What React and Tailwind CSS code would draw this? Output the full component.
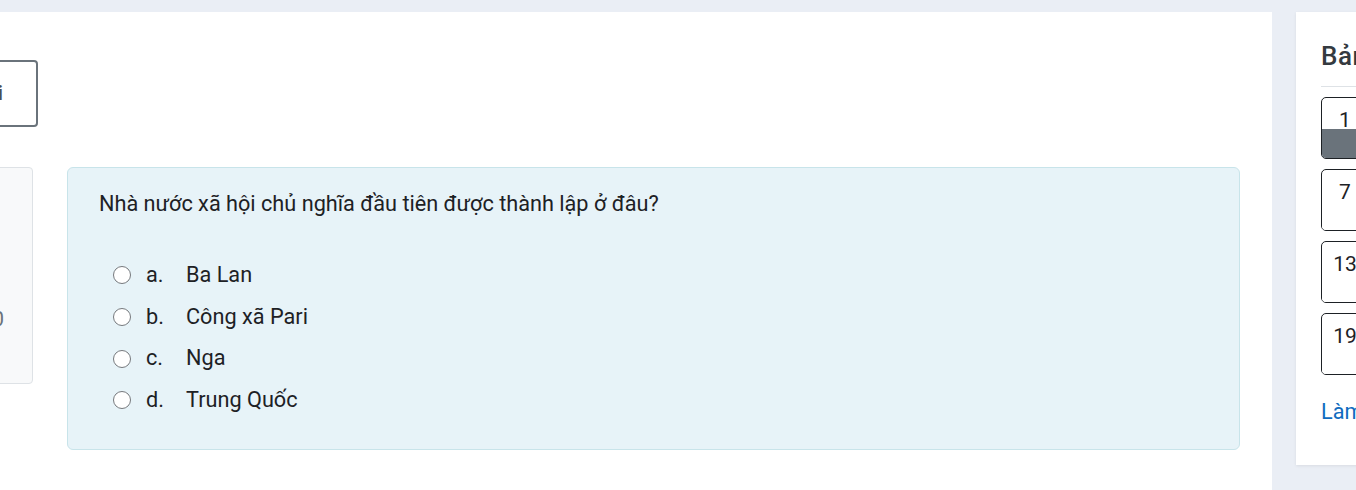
import React from "react";

const font = { fontFamily: "Roboto, 'Noto Sans', sans-serif" };

function Option({ letter, text }) {
  return (
    <div className="flex h-[41.67px] items-center">
      <span className="ml-[14px] box-border h-[18px] w-[18px] rounded-full border-[1.5px] border-[#76797d] bg-white" />
      <span className="ml-[15px] w-[40px] text-[21.7px] text-[#1d2125]">{letter}</span>
      <span className="text-[21.7px] text-[#1d2125]">{text}</span>
    </div>
  );
}

function NavBtn({ n, filled }) {
  return (
    <div className="flex h-[62px] w-[48px] flex-col overflow-hidden rounded-[5px] border border-[#1d2125] bg-white">
      <div className="flex h-[31px] justify-center pt-[9px] text-[21px] leading-[26px] text-[#1d2125]">{n}</div>
      <div className={filled ? "flex-1 bg-[#6a737b]" : "flex-1 bg-white"} />
    </div>
  );
}

export default function App() {
  return (
    <div style={font} className="flex h-[490px] w-[1356px] gap-[24px] overflow-hidden bg-[#eaeef5] pt-[12px]">
      <div className="flex w-[1272px] shrink-0 flex-col overflow-hidden bg-white">
        <div className="mt-[48px] flex h-[67px]">
          <div className="ml-[-80px] flex h-[67px] w-[118px] items-center justify-end rounded-[4px] border-2 border-[#6a737b] pr-[33px] text-[21px] font-semibold text-[#4a4f55]">
            Lưu bài
          </div>
        </div>
        <div className="mt-[40px] flex">
          <div className="ml-[-80px] flex h-[217px] w-[113px] items-start justify-end rounded-[4px] border border-[#dee2e6] bg-[#f8f9fa] pr-[28px] pt-[136px] text-[21px] leading-[30px] text-[#6a737b]">
            0
          </div>
          <div className="ml-[34px] box-border h-[283px] w-[1173px] rounded-[6px] border border-[#c8e4ea] bg-[#e7f3f8] pl-[31px] pt-[20px]">
            <div className="text-[21.7px] leading-[32.5px] text-[#1d2125]">
              Nhà nước xã hội chủ nghĩa đầu tiên được thành lập ở đâu?
            </div>
            <div className="mt-[34px] flex flex-col">
              <Option letter="a." text="Ba Lan" />
              <Option letter="b." text="Công xã Pari" />
              <Option letter="c." text="Nga" />
              <Option letter="d." text="Trung Quốc" />
            </div>
          </div>
        </div>
      </div>
      <div className="h-[453px] w-[300px] shrink-0 bg-white pl-[25px] shadow-[0_1px_3px_rgba(0,0,0,0.08)]">
        <div className="mt-[24px] text-[26px] font-medium leading-[40px] tracking-[0.5px] text-[#343a40]">Bảng câu hỏi</div>
        <div className="mt-[10px] h-px bg-[#dee2e6]" />
        <div className="mt-[10px] flex flex-col gap-[10px]">
          <NavBtn n="1" filled />
          <NavBtn n="7" />
          <NavBtn n="13" />
          <NavBtn n="19" />
        </div>
        <div className="mt-[23px] text-[21.7px] leading-[28px] text-[#0f6cbf]">Làm bài</div>
      </div>
    </div>
  );
}
